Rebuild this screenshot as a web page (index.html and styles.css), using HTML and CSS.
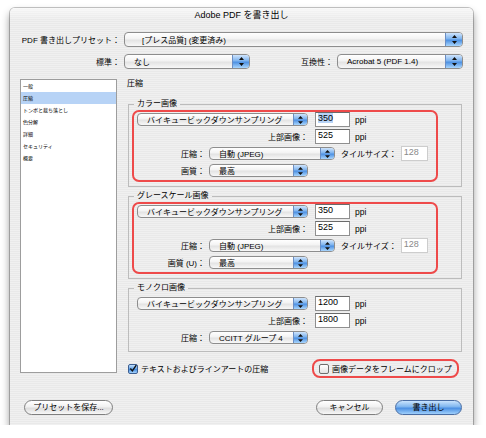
FILE: index.html
```html
<!DOCTYPE html>
<html lang="ja">
<head>
<meta charset="utf-8">
<title>Adobe PDF を書き出し</title>
<link rel="stylesheet" href="styles.css">
</head>
<body>
<div class="window">
  <div class="titlebar">Adobe PDF を書き出し</div>

  <div class="form-top">
    <div class="row">
      <span class="lbl lbl-main">PDF 書き出しプリセット：</span>
      <div class="popup popup-lg popup-preset"><span class="ptext ptext-preset">[プレス品質] (変更済み)</span><span class="cap cap-lg"><svg width="5" height="9" viewBox="0 0 5 9"><path d="M2.5 0L5 3H0z M0 6H5L2.5 9z" fill="#111"/></svg></span></div>
    </div>
    <div class="row row2">
      <span class="lbl lbl-main">標準：</span>
      <div class="popup popup-lg popup-half"><span class="ptext">なし</span><span class="cap cap-lg"><svg width="5" height="9" viewBox="0 0 5 9"><path d="M2.5 0L5 3H0z M0 6H5L2.5 9z" fill="#111"/></svg></span></div>
      <span class="lbl lbl-compat">互換性：</span>
      <div class="popup popup-lg popup-half"><span class="ptext">Acrobat 5 (PDF 1.4)</span><span class="cap cap-lg"><svg width="5" height="9" viewBox="0 0 5 9"><path d="M2.5 0L5 3H0z M0 6H5L2.5 9z" fill="#111"/></svg></span></div>
    </div>
  </div>

  <div class="main">
    <ul class="sidebar">
      <li>一般</li>
      <li class="sel">圧縮</li>
      <li>トンボと裁ち落とし</li>
      <li>色分解</li>
      <li>詳細</li>
      <li>セキュリティ</li>
      <li>概要</li>
    </ul>

    <div class="content">
      <div class="heading">圧縮</div>

      <fieldset class="group">
        <legend>カラー画像</legend>
        <div class="box box-red">
          <div class="frow">
            <div class="popup popup-sm popup-wide"><span class="ptext">バイキュービックダウンサンプリング</span><span class="cap"><svg width="5" height="8" viewBox="0 0 5 8"><path d="M2.5 0L5 2.8H0z M0 5.2H5L2.5 8z" fill="#111"/></svg></span></div>
            <div class="field"><span class="selected">350</span></div>
            <span class="unit">ppi</span>
          </div>
          <div class="frow">
            <span class="lbl lbl-wide">上部画像：</span>
            <div class="field">525</div>
            <span class="unit">ppi</span>
          </div>
          <div class="frow">
            <span class="lbl lbl-col">圧縮：</span>
            <div class="popup popup-sm popup-mid"><span class="ptext">自動 (JPEG)</span><span class="cap"><svg width="5" height="8" viewBox="0 0 5 8"><path d="M2.5 0L5 2.8H0z M0 5.2H5L2.5 8z" fill="#111"/></svg></span></div>
            <span class="lbl lbl-tile">タイルサイズ：</span>
            <div class="field field-off">128</div>
          </div>
          <div class="frow">
            <span class="lbl lbl-col">画質：</span>
            <div class="popup popup-sm popup-short"><span class="ptext">最高</span><span class="cap"><svg width="5" height="8" viewBox="0 0 5 8"><path d="M2.5 0L5 2.8H0z M0 5.2H5L2.5 8z" fill="#111"/></svg></span></div>
          </div>
        </div>
      </fieldset>

      <fieldset class="group">
        <legend>グレースケール画像</legend>
        <div class="box box-red">
          <div class="frow">
            <div class="popup popup-sm popup-wide"><span class="ptext">バイキュービックダウンサンプリング</span><span class="cap"><svg width="5" height="8" viewBox="0 0 5 8"><path d="M2.5 0L5 2.8H0z M0 5.2H5L2.5 8z" fill="#111"/></svg></span></div>
            <div class="field">350</div>
            <span class="unit">ppi</span>
          </div>
          <div class="frow">
            <span class="lbl lbl-wide">上部画像：</span>
            <div class="field">525</div>
            <span class="unit">ppi</span>
          </div>
          <div class="frow">
            <span class="lbl lbl-col">圧縮：</span>
            <div class="popup popup-sm popup-mid"><span class="ptext">自動 (JPEG)</span><span class="cap"><svg width="5" height="8" viewBox="0 0 5 8"><path d="M2.5 0L5 2.8H0z M0 5.2H5L2.5 8z" fill="#111"/></svg></span></div>
            <span class="lbl lbl-tile">タイルサイズ：</span>
            <div class="field field-off">128</div>
          </div>
          <div class="frow">
            <span class="lbl lbl-col">画質 (U)：</span>
            <div class="popup popup-sm popup-short"><span class="ptext">最高</span><span class="cap"><svg width="5" height="8" viewBox="0 0 5 8"><path d="M2.5 0L5 2.8H0z M0 5.2H5L2.5 8z" fill="#111"/></svg></span></div>
          </div>
        </div>
      </fieldset>

      <fieldset class="group group-mono">
        <legend>モノクロ画像</legend>
        <div class="box">
          <div class="frow">
            <div class="popup popup-sm popup-wide"><span class="ptext">バイキュービックダウンサンプリング</span><span class="cap"><svg width="5" height="8" viewBox="0 0 5 8"><path d="M2.5 0L5 2.8H0z M0 5.2H5L2.5 8z" fill="#111"/></svg></span></div>
            <div class="field">1200</div>
            <span class="unit">ppi</span>
          </div>
          <div class="frow">
            <span class="lbl lbl-wide">上部画像：</span>
            <div class="field">1800</div>
            <span class="unit">ppi</span>
          </div>
          <div class="frow">
            <span class="lbl lbl-col">圧縮：</span>
            <div class="popup popup-sm popup-short"><span class="ptext">CCITT グループ 4</span><span class="cap"><svg width="5" height="8" viewBox="0 0 5 8"><path d="M2.5 0L5 2.8H0z M0 5.2H5L2.5 8z" fill="#111"/></svg></span></div>
          </div>
        </div>
      </fieldset>

      <div class="checks">
        <label class="check"><span class="cb cb-on"><svg width="9" height="9" viewBox="0 0 9 9"><path d="M1.5 4.5L3.8 7.2L8.2 0.8" fill="none" stroke="#111" stroke-width="1.6"/></svg></span>テキストおよびラインアートの圧縮</label>
        <label class="check crop"><span class="cb"></span>画像データをフレームにクロップ</label>
      </div>
    </div>
  </div>

  <div class="footer">
    <div class="btn btn-save">プリセットを保存...</div>
    <div class="spacer"></div>
    <div class="btn btn-cancel">キャンセル</div>
    <div class="btn btn-ok">書き出し</div>
  </div>
</div>
</body>
</html>
```

FILE: styles.css
```css
html, body {
  margin: 0;
  padding: 0;
  background: #ffffff;
}

body {
  font-family: "Liberation Sans", "Noto Sans CJK JP", sans-serif;
  font-size: 8px;
  color: #000;
}

.window {
  margin: 8px 0 0 10px;
  width: 463px;
  height: 417px;
  box-sizing: border-box;
  border-radius: 5px 5px 0 0;
  background: repeating-linear-gradient(to bottom, #f0f0f0 0 1px, #e9e9e9 1px 2px);
  box-shadow: 0 0 0 1px rgba(0, 0, 0, 0.22), 0 5px 9px rgba(0, 0, 0, 0.45);
  display: flex;
  flex-direction: column;
}

.titlebar {
  height: 20px;
  line-height: 15px;
  text-align: center;
  font-size: 9px;
  border-radius: 5px 5px 0 0;
  background: linear-gradient(to bottom, rgba(255, 255, 255, 0.6), rgba(255, 255, 255, 0) 60%);
}

.form-top {
  padding-top: 4px;
}

.row {
  display: flex;
  align-items: center;
  height: 15px;
}

.row2 {
  margin-top: 7px;
}

.lbl {
  flex: none;
  text-align: right;
  white-space: nowrap;
}

.lbl-main {
  width: 110px;
  margin-right: 4px;
}

.lbl-compat {
  width: 83px;
  margin-right: 4px;
}

/* Aqua popup buttons */
.popup {
  flex: none;
  display: flex;
  align-items: center;
  box-sizing: border-box;
  border: 1px solid #8d8d8d;
  border-radius: 4px;
  background: linear-gradient(to bottom, #ffffff 0%, #f3f3f3 45%, #e3e3e3 55%, #f8f8f8 100%);
  overflow: hidden;
}

.popup-lg {
  height: 15px;
}

.popup-sm {
  height: 13px;
}

.popup-preset {
  width: 339px;
}

.popup-half {
  width: 126px;
}

.popup-wide {
  width: 171px;
}

.popup-mid {
  width: 126px;
}

.popup-short {
  width: 99px;
}

.ptext {
  flex: 1;
  padding-left: 9px;
  white-space: nowrap;
  overflow: hidden;
}

.ptext-preset {
  padding-left: 17px;
}

.cap {
  flex: none;
  width: 13px;
  align-self: stretch;
  display: flex;
  align-items: center;
  justify-content: center;
  border-left: 1px solid #6b8ec4;
  background: linear-gradient(to bottom, #cfe4fc 0%, #7db3ee 45%, #4d90e2 55%, #a9d6fd 100%);
}

.cap-lg {
  width: 16px;
}

/* Sidebar list */
.main {
  display: flex;
  margin-top: 10px;
  padding-left: 10px;
}

.sidebar {
  flex: none;
  width: 97px;
  height: 294px;
  box-sizing: border-box;
  margin: 0;
  padding: 0;
  list-style: none;
  background: #ffffff;
  border: 1px solid #9d9d9d;
  font-size: 5px;
}

.sidebar li {
  height: 12px;
  line-height: 12px;
  padding-left: 2px;
  white-space: nowrap;
}

.sidebar li.sel {
  background: #b7d3f6;
}

/* Content */
.content {
  margin-left: 10px;
  width: 335px;
}

.heading {
  height: 10px;
  line-height: 10px;
}

.group {
  margin: 10px 0 0 1px;
  padding: 1px 3px 4px 3px;
  width: 334px;
  min-width: 0;
  box-sizing: border-box;
  border: 1px solid #bcbcbc;
}

.group + .group {
  margin-top: 4px;
}

.group-mono {
  padding-bottom: 2px;
}

.group legend {
  margin-left: 2px;
  padding: 0 3px;
  height: 10px;
  line-height: 10px;
  font-size: 8px;
}

.box {
  width: 306px;
  box-sizing: border-box;
  border: 2px solid transparent;
  border-radius: 7px;
  padding: 0 2px 2px 3px;
  display: flex;
  flex-direction: column;
  gap: 2px;
}

.box-red {
  border-color: #ee4a4a;
}

.frow {
  display: flex;
  align-items: center;
  height: 15px;
}

.popup-wide {
  margin-right: 7px;
}

.lbl-wide {
  width: 171px;
  margin-right: 7px;
}

.lbl-col {
  width: 68px;
  margin-right: 4px;
}

.lbl-tile {
  margin-left: 6px;
  margin-right: 4px;
}

.field {
  flex: none;
  width: 35px;
  height: 15px;
  box-sizing: border-box;
  border: 1px solid #8f8f8f;
  border-top-color: #6a6a6a;
  background: #ffffff;
  padding: 0 2px;
  font-size: 9px;
  line-height: 11px;
  white-space: nowrap;
}

.field-off {
  width: 27px;
  border-color: #cdcdcd;
  color: #8a8a8a;
}

.selected {
  background: #b7d3f6;
}

.unit {
  margin-left: 5px;
  font-size: 8.5px;
}

/* Checkboxes */
.checks {
  display: flex;
  align-items: center;
  justify-content: space-between;
  margin-top: 7px;
  height: 19px;
  padding-left: 1px;
  padding-right: 3px;
}

.check {
  display: flex;
  align-items: center;
  white-space: nowrap;
}

.cb {
  flex: none;
  width: 10px;
  height: 10px;
  box-sizing: border-box;
  margin-right: 3px;
  border: 1px solid #6d6d6d;
  border-radius: 2px;
  background: linear-gradient(to bottom, #ffffff, #e2e2e2);
  display: flex;
  align-items: center;
  justify-content: center;
}

.cb-on {
  border-color: #3d5f92;
  background: linear-gradient(to bottom, #c2e0fd 0%, #6aa8eb 45%, #428ade 55%, #a4d2fc 100%);
}

.crop {
  width: 147px;
  height: 19px;
  box-sizing: border-box;
  border: 2px solid #ee4a4a;
  border-radius: 8px;
  padding-left: 5px;
}

/* Footer buttons */
.footer {
  display: flex;
  margin-top: 22px;
  padding: 0 11px 0 14px;
}

.spacer {
  flex: 1;
}

.btn {
  flex: none;
  height: 15px;
  box-sizing: border-box;
  border: 1px solid #7f7f7f;
  border-radius: 8px;
  background: linear-gradient(to bottom, #ffffff 0%, #f1f1f1 45%, #dddddd 55%, #f7f7f7 100%);
  text-align: center;
  line-height: 13px;
  white-space: nowrap;
}

.btn-save {
  width: 89px;
}

.btn-cancel {
  width: 67px;
  margin-right: 12px;
}

.btn-ok {
  width: 67px;
  border-color: #4a6da3;
  background: linear-gradient(to bottom, #c9e3fd 0%, #7eb5ef 45%, #4b8fe2 55%, #9fd0fc 100%);
}
```
